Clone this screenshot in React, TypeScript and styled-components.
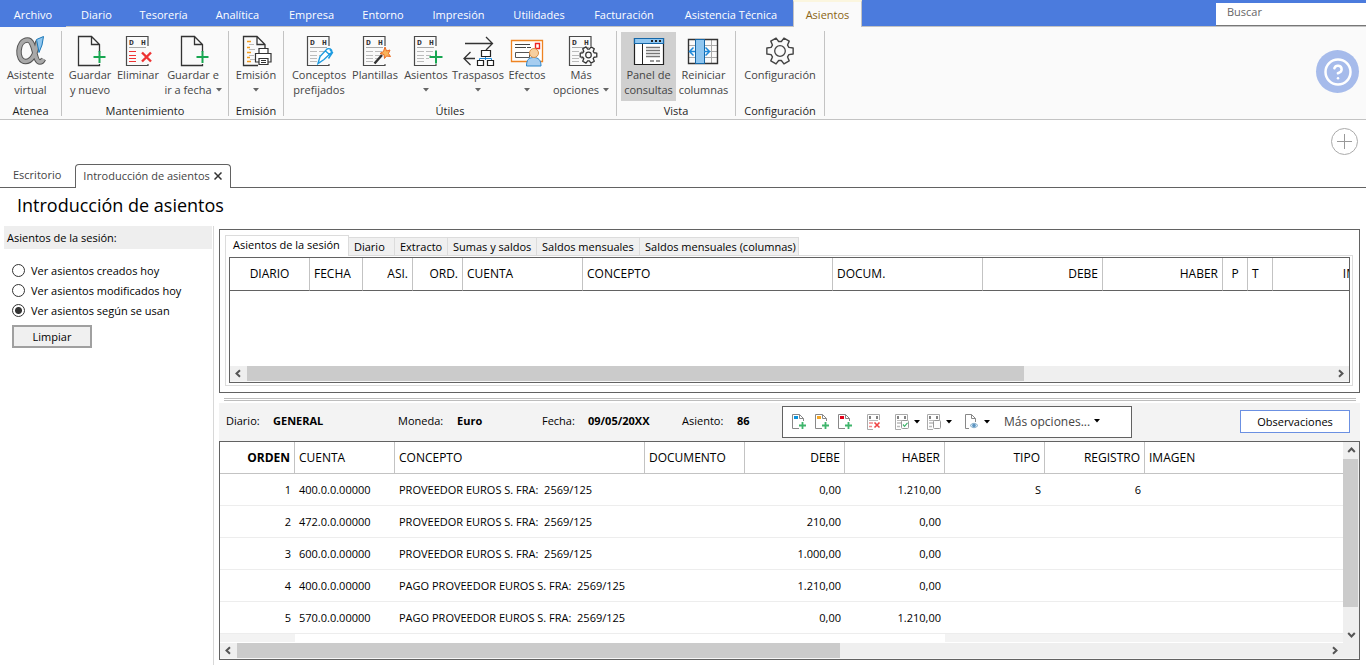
import React, { ReactNode, useState } from 'react';
import styled, { createGlobalStyle, css } from 'styled-components';
import { CircleHelp } from 'lucide-react';

const blue = '#4b7bdd';
const line = '#c3c3c3';
const dark = '#626262';

const GlobalStyle = createGlobalStyle`
  *, *::before, *::after { box-sizing: border-box; }
  body {
    margin: 0;
    background: #fff;
    color: #000;
    font-family: 'Open Sans', 'Noto Sans', sans-serif;
    font-size: 11px;
    line-height: 15px;
  }
  button, input { font: inherit; color: inherit; }
  button { border: 0; padding: 0; background: none; cursor: pointer; }
  svg { display: block; flex: none; }
`;

/* ---------- page ---------- */

const Page = styled.div`
  display: flex;
  flex-direction: column;
  min-height: 100vh;
  overflow: hidden;
`;

const MenuBar = styled.nav`
  display: flex;
  height: 27px;
  background: ${blue};
  box-shadow: inset 0 -1px 0 ${line};
`;

const MenuItem = styled.button<{ $width: number; $solid?: boolean; $active?: boolean }>`
  width: ${(p) => p.$width}px;
  flex: none;
  padding-top: 1px;
  color: #fff;
  white-space: nowrap;
  ${(p) => p.$solid && css`background: ${blue};`}
  ${(p) =>
    p.$active &&
    css`
      padding: 0 0 1px;
      background: #fafafa;
      color: #8a6414;
      border: 1px solid ${line};
      border-top: 2px solid #fbf6df;
      border-bottom: 0;
    `}
`;

const Search = styled.input`
  width: 150px;
  height: 23px;
  margin: 3px 0 0 auto;
  padding: 0 11px 6px;
  border: 0;
  border-bottom: 1px solid #777;
  border-radius: 0;
  background: #fff;
  outline: 0;
  &::placeholder { color: #666; opacity: 1; }
`;

const Ribbon = styled.div`
  display: flex;
  height: 93px;
  padding-top: 4px;
  background: #fafafa;
  border-bottom: 1px solid ${line};
`;

const Group = styled.section`
  display: flex;
  flex-direction: column;
  height: 85px;
  padding: 1px 4px 0;
  border-right: 1px solid ${line};
`;

const GroupTools = styled.div`
  display: flex;
  flex: none;
  height: 69px;
`;

const GroupName = styled.div`
  flex: none;
  padding-top: 2px;
  text-align: center;
  color: #1e1e1e;
`;

const Tool = styled.button<{ $width: number; $pressed?: boolean }>`
  display: flex;
  flex-direction: column;
  align-items: center;
  width: ${(p) => p.$width}px;
  padding-top: 3px;
  color: #444;
  white-space: nowrap;
  background: ${(p) => (p.$pressed ? '#d0d0d0' : 'transparent')};
`;

const ToolLine = styled.span`
  display: flex;
  align-items: center;
  gap: 4px;
  height: 15px;
`;

const Help = styled.button`
  display: flex;
  align-items: center;
  justify-content: center;
  width: 43px;
  height: 43px;
  margin: 19px 7px 0 auto;
  border-radius: 50%;
  background: #a6bbeb;
  color: #fff;
`;

const DocBar = styled.div`
  display: flex;
  align-items: flex-end;
  height: 68px;
  border-bottom: 1px solid ${dark};
`;

const DocTab = styled.div<{ $active?: boolean }>`
  display: flex;
  align-items: center;
  gap: 4px;
  height: 24px;
  padding: 0 14px 2px 13px;
  color: #444;
  ${(p) =>
    p.$active &&
    css`
      padding: 0 8px 2px 7px;
      margin-bottom: -1px;
      background: #fff;
      border: 1px solid ${dark};
      border-bottom: 0;
      border-radius: 4px 4px 0 0;
    `}
`;

const AddTab = styled.button`
  align-self: flex-start;
  margin: 7px 8px 0 auto;
`;

const Title = styled.h1`
  margin: 0;
  padding: 5px 17px 0;
  height: 38px;
  font-size: 18px;
  line-height: 24px;
  font-weight: 400;
`;

const Main = styled.main`
  display: flex;
  flex: 1;
`;

const Sidebar = styled.aside`
  width: 214px;
  flex: none;
  padding: 0 1px 0 4px;
  border-right: 1px solid #d8d8d8;
`;

const SidebarHead = styled.h2`
  margin: 0 0 11px;
  padding: 4px 3px;
  font-size: 11px;
  font-weight: 400;
  background: #eee;
`;

const Option = styled.label`
  display: flex;
  align-items: center;
  gap: 6px;
  height: 20px;
  padding-left: 8px;
`;

const Radio = styled.input`
  appearance: none;
  width: 13px;
  height: 13px;
  margin: 0;
  border: 1px solid #333;
  border-radius: 50%;
  background: #fff;
  &:checked { background: radial-gradient(circle, #333 0 3px, #fff 4px); }
`;

const ClearButton = styled.button`
  width: 80px;
  height: 23px;
  margin: 5px 0 0 8px;
  border: 2px solid #a0a0a0;
  background: #f0f0f0;
`;

const Content = styled.div`
  flex: 1;
  min-width: 0;
  padding: 3px 6px 5px 5px;
`;

/* ---------- query panel ---------- */

const QueryPanel = styled.section`
  padding: 5px 6px 6px 5px;
  border: 1px solid ${dark};
`;

const QueryTabs = styled.div`
  display: flex;
  align-items: flex-end;
`;

const QueryTab = styled.button<{ $width: number; $active?: boolean }>`
  width: ${(p) => p.$width}px;
  height: 18px;
  padding: 0 0 1px 5px;
  border: 1px solid #dcdcdc;
  border-width: 1px 1px 0 0;
  background: #f0f0f0;
  text-align: left;
  white-space: nowrap;
  ${(p) =>
    p.$active &&
    css`
      height: 21px;
      padding: 0 0 3px 7px;
      margin-bottom: -1px;
      border-left-width: 1px;
      background: #fff;
    `}
`;

const QueryFrame = styled.div`
  padding: 1px 2px 2px 3px;
  border: 1px solid #dcdcdc;
`;

const GridBox = styled.div`
  border: 1px solid ${dark};
  overflow: hidden;
`;

const QueryBody = styled.div`
  height: 108px;
  overflow: hidden;
`;

const Table = styled.table<{ $width?: string }>`
  width: ${(p) => p.$width ?? '100%'};
  table-layout: fixed;
  border-collapse: separate;
  border-spacing: 0;
`;

type Align = 'left' | 'right' | 'center';

const Th = styled.th<{ $align: Align; $bold?: boolean }>`
  height: 32px;
  padding: 0 4px;
  font-size: 12px;
  font-weight: ${(p) => (p.$bold ? 700 : 400)};
  text-align: ${(p) => p.$align};
  white-space: nowrap;
  border-right: 1px solid ${line};
  border-bottom: 1px solid ${line};
  &:last-child { border-right: 0; }
`;

const QueryHead = styled.thead`
  ${Th} { height: 33px; padding-bottom: 2px; border-bottom-color: ${dark}; }
`;

const Td = styled.td<{ $align: Align }>`
  height: 32px;
  padding: 0 4px;
  text-align: ${(p) => p.$align};
  white-space: pre;
  border-bottom: 1px solid #ededed;
`;

const RestCell = styled.td<{ $gray?: boolean }>`
  height: 8px;
  padding: 0;
  background: ${(p) => (p.$gray ? '#f3f3f3' : '#fff')};
`;

const HTrack = styled.div`
  display: flex;
  align-items: center;
  height: 16px;
  border-bottom: 1px solid #f7f7f7;
  background: #efefef;
`;

const VTrack = styled.div`
  display: flex;
  flex-direction: column;
  width: 16px;
  flex: none;
  background: #efefef;
`;

const ScrollButton = styled.button`
  display: flex;
  align-items: center;
  justify-content: center;
  width: 17px;
  height: 17px;
  flex: none;
`;

const HThumb = styled.div<{ $size: string }>`
  width: ${(p) => p.$size};
  height: 15px;
  background: #cbcbcb;
`;

const VThumb = styled.div<{ $size: string }>`
  width: 15px;
  height: ${(p) => p.$size};
  background: #cbcbcb;
`;

const Rail = styled.div`
  flex: 1;
  min-width: 0;
`;

const Splitter = styled.div`
  height: 3px;
  margin: 5px 4px 2px 5px;
  border: solid #bdbdbd;
  border-width: 1px 0;
`;

/* ---------- entry panel ---------- */

const InfoBar = styled.div`
  display: flex;
  align-items: center;
  height: 38px;
  padding: 0 10px 0 7px;
  background: #f3f3f3;
`;

const Field = styled.div<{ $width: number }>`
  display: flex;
  width: ${(p) => p.$width}px;
  padding-bottom: 4px;
`;

const FieldName = styled.span<{ $width: number }>`
  width: ${(p) => p.$width}px;
`;

const ToolStrip = styled.div`
  display: flex;
  align-items: center;
  gap: 6px;
  width: 350px;
  height: 32px;
  padding-left: 4px;
  border: 1px solid ${dark};
  background: #fff;
`;

const StripGroup = styled.div`
  display: flex;
`;

const StripButton = styled.button<{ $split?: boolean }>`
  display: flex;
  align-items: center;
  gap: 4px;
  width: ${(p) => (p.$split ? 32 : 23)}px;
  height: 24px;
  padding-left: ${(p) => (p.$split ? 3 : 4)}px;
`;

const MoreButton = styled.button`
  display: flex;
  align-items: center;
  gap: 4px;
  padding: 0 0 2px 5px;
  font-size: 12px;
  color: #444;
`;

const NotesButton = styled.button`
  width: 110px;
  height: 23px;
  margin: 0 0 2px auto;
  border: 1px solid #6b90e2;
  background: #fff;
`;

const EntryRow = styled.div`
  display: flex;
`;

const EntryBody = styled.div`
  flex: 1;
  min-width: 0;
  border-bottom: 1px solid #fff;
`;

/* ---------- icons ---------- */

const Svg = ({ w = 34, h = 32, children }: { w?: number; h?: number; children: ReactNode }) => (
  <svg width={w} height={h} viewBox={`0 0 ${w} ${h}`} fill="none" aria-hidden="true">
    {children}
  </svg>
);

const Caret = ({ color = '#000' }: { color?: string }) => (
  <Svg w={6} h={4}>
    <path d="M0 0h6L3 3.5z" fill={color} />
  </Svg>
);

const Chevron = ({ turn = 0 }: { turn?: number }) => (
  <svg width="9" height="9" viewBox="0 0 9 9" fill="none" aria-hidden="true">
    <path d="M6 1.2L2.5 4.5L6 7.8" stroke="#555" strokeWidth="2" transform={`rotate(${turn} 4.5 4.5)`} />
  </svg>
);

const gearPath = (cx: number, cy: number, outer: number, inner: number) => {
  const pts: string[] = [];
  for (let i = 0; i < 6; i++) {
    const a = i * 60;
    [
      [inner, -22],
      [outer, -13],
      [outer, 13],
      [inner, 22],
    ].forEach(([r, d]) => {
      const t = ((a + d) * Math.PI) / 180;
      pts.push(`${(cx + r * Math.cos(t)).toFixed(2)} ${(cy + r * Math.sin(t)).toFixed(2)}`);
    });
  }
  return `M${pts.join('L')}Z`;
};

const alphaCurve = 'M24 6C22.500 15 19 26.500 11.500 26.500C2 26.500 3 5 13.500 5C21.500 5 19.500 27 26 27C27.500 27 28.500 26 29.500 24';

const AlphaIcon = () => (
  <Svg>
    <path d={alphaCurve} stroke="#555" strokeWidth="5.500" />
    <path d={alphaCurve} stroke="#a9a9a9" strokeWidth="3.500" />
    <path d="M22.500 4.500L29.500 1.500L28 10L25 17.500Z" fill="#8fc6ef" stroke="#1b78b8" />
  </Svg>
);

const NewDocIcon = () => (
  <Svg>
    <path d="M26.500 17V9.500L18.500 1.500H5.500V30.500H26.500V29M18.500 1.500V9.500H26.500" stroke="#333" strokeWidth="1.300" />
    <path d="M26.500 16v12M20.500 22h12" stroke="#18a651" strokeWidth="2" />
  </Svg>
);

const LedgerIcon = ({ red, children }: { red?: boolean; children: ReactNode }) => (
  <Svg>
    <path d="M27 11V1.500H5.500V30.500H27V29" stroke="#4a4a4a" strokeWidth="1.200" />
    <g fill="#333" fontFamily="'Liberation Mono', monospace" fontSize="8" fontWeight="700">
      <text x="8" y="10">D</text>
      <text x="20" y="10">H</text>
    </g>
    <path d="M8 12.500H25" stroke="#aaa" />
    <path d="M8 16.500h7M8 20.500h7M8 23.500h7M8 26.500h7" stroke={red ? '#e33' : '#bbb'} />
    {!red && <path d="M17 16.500h7M17 20.500h5M17 23.500h3" stroke="#bbb" />}
    {children}
  </Svg>
);

const DeleteIcon = () => (
  <LedgerIcon red>
    <path d="M21 17.500l9 9M30 17.500l-9 9" stroke="#e33" strokeWidth="2.400" />
  </LedgerIcon>
);

const PenIcon = () => (
  <LedgerIcon>
    <path d="M16 28.500l2-7 7-7.500c2-1 5 0 5 3l-8 7.500zM23.500 16l4.500 4M28 15l2.500 2.500-4 6" fill="#fff" stroke="#1e9be0" strokeWidth="1.400" />
  </LedgerIcon>
);

const WandIcon = () => (
  <LedgerIcon>
    <path d="M16.500 28.500L24 20" stroke="#333" strokeWidth="2.400" />
    <path d="M27 12l1.500 4 3.500-1-1.500 3.500 2 3-4-.5-2 2.500-.5-4-4-1 3.500-2z" fill="#f9b25a" stroke="#ea6a20" />
  </LedgerIcon>
);

const AddEntryIcon = () => (
  <LedgerIcon>
    <path d="M27 15.500v13M20.500 22h13" stroke="#18a651" strokeWidth="2" />
  </LedgerIcon>
);

const MoreIcon = () => (
  <LedgerIcon>
    <path d={gearPath(24.5, 20, 8.5, 6)} fill="#fafafa" stroke="#333" strokeWidth="1.300" strokeLinejoin="round" />
    <circle cx="24.500" cy="20" r="2.800" stroke="#333" strokeWidth="1.200" />
  </LedgerIcon>
);

const PrintIcon = () => (
  <Svg>
    <path d="M26 13V9.500L18 1.500H4.500V30.500H19M18 1.500V9.500H26" stroke="#333" strokeWidth="1.300" />
    <path d="M8 6.500h4M8 12.500h3M8 17.500h4M8 22.500h3M8 26.500h4" stroke="#f49a1a" strokeWidth="1.400" />
    <path d="M10 9.500h5M10 14.500h6M10 20.500h5M11 24.500h5" stroke="#bbb" />
    <path d="M20 18v-4.500h9V18M20 27h-3.500v-8.500h15.500v8.500h-3M20 23.500h9v6h-9zM22 25.500h5M22 27.500h5" fill="#fff" stroke="#333" strokeWidth="1.200" />
  </Svg>
);

const TransferIcon = () => (
  <Svg>
    <path d="M4 8.500H31M25 2l6.500 6.500L25 15M14 23.500H3.500M9.500 17L3 23.500L9.500 30" stroke="#333" strokeWidth="1.300" />
    <path d="M24.500 22v3M18.500 26v-2.500h12V26" stroke="#1e88d8" />
    <path d="M20.500 15.500h9v6h-9zM16.500 25.500h6v5h-6zM26.500 25.500h6v5h-6z" fill="#fff" stroke="#222" strokeWidth="1.200" />
  </Svg>
);

const EffectsIcon = () => (
  <Svg>
    <path d="M1.500 5.500H32.500V26.500H1.500z" fill="#fff" stroke="#ee8322" strokeWidth="1.300" />
    <path d="M5 9.500h15M5 12.500h11M17 12.500h4" stroke="#444" />
    <path d="M5.500 17.500h14v5h-14z" stroke="#555" />
    <path d="M25.500 8.500h4v5h-4z" stroke="#e22" strokeWidth="1.400" />
    <path d="M16.500 31c0-6 2-8.500 7-8.500s7.500 2.500 7.500 8.500z" fill="#a6cdf0" stroke="#2c86cc" />
    <circle cx="24" cy="18" r="4.500" fill="#f8cf9f" stroke="#d98c44" />
  </Svg>
);

const PanelIcon = () => (
  <Svg>
    <path d="M2.500 3.500h29v26h-29z" fill="#fff" stroke="#222" strokeWidth="1.200" />
    <path d="M2.500 3.500h29v5h-29z" fill="#8fc6f0" stroke="#1567a8" strokeWidth="1.200" />
    <path d="M19 6h2M23 6h2M27 6h2" stroke="#222" strokeWidth="2" />
    <path d="M10.500 9v20" stroke="#222" />
    <path d="M14 12.500h14M14 15.500h14M14 18.500h14M14 21.500h14M18 26h4M24 26h4" stroke="#777" strokeWidth="1.300" />
  </Svg>
);

const ColumnsIcon = () => (
  <Svg>
    <path d="M2 10.500h29M2 16.500h29M2 22.500h29M24.500 4v25" stroke="#aaa" />
    <path d="M1.500 4.500h29v24h-29z" stroke="#333" strokeWidth="1.400" />
    <path d="M8.500 4.500h9v24h-9z" fill="#8fc6f0" stroke="#1567a8" />
    <path d="M8 16.500H2.500M6.500 12.500l-4 4 4 4M17 16.500h5.500M18.500 12.500l4 4-4 4" stroke="#1e88d8" strokeWidth="1.500" />
  </Svg>
);

const GearIcon = () => (
  <Svg>
    <path d={gearPath(17, 16, 13.5, 9.6)} stroke="#444" strokeWidth="1.400" strokeLinejoin="round" />
    <circle cx="17" cy="16" r="5.300" stroke="#444" strokeWidth="1.300" />
  </Svg>
);

const SmallDoc = ({ color }: { color: string }) => (
  <Svg w={16} h={18}>
    <path d="M12.500 8V5.500L8.500 1.500H1.500V15.500H8M8.500 1.500V5.500H12.500" stroke="#888" />
    <path d="M3 3h4v3H3z" fill={color} />
    <path d="M11.500 9v7M8 12.500h7" stroke="#3fb56c" strokeWidth="1.800" />
  </Svg>
);

const SmallLedger = ({ kind }: { kind: 'delete' | 'check' | 'copy' }) => (
  <Svg w={16} h={18}>
    <path d="M13.500 7V1.500H1.500V16.500H7" stroke="#aaa" />
    <path d="M4 3v3M11 3v3" stroke="#666" strokeWidth="1.600" />
    <path d="M3 7.500h9" stroke="#bbb" />
    <path d="M3 10h4M3 13.500h3" stroke={kind === 'delete' ? '#ee8a8a' : '#bbb'} strokeWidth="1.400" />
    {kind === 'delete' && <path d="M8.500 9.500l5 5M13.500 9.500l-5 5" stroke="#e44" strokeWidth="1.600" />}
    {kind !== 'delete' && <rect x="7.500" y="7.500" width="7" height="8" rx="1" fill="#fff" stroke="#999" />}
    {kind === 'check' && <path d="M9 11.500l1.500 1.800 3-3.500" stroke="#3fb56c" strokeWidth="1.200" />}
  </Svg>
);

const ViewDoc = () => (
  <Svg w={16} h={18}>
    <path d="M11.500 9V5.500L7.500 1.500H1.500V15.500H5M7.500 1.500V5.500H11.500" stroke="#888" />
    <path d="M6 12.500q4-4.500 8 0q-4 4.500-8 0z" fill="#dcecf8" stroke="#8ab0cc" />
    <circle cx="10" cy="12.500" r="1.800" fill="#5a93c0" />
  </Svg>
);

const PlusCircle = () => (
  <Svg w={28} h={28}>
    <circle cx="14.500" cy="14.500" r="13" stroke="#aaa" />
    <path d="M14.500 7v15M7 14.500h15" stroke="#999" />
  </Svg>
);

const CloseIcon = () => (
  <Svg w={8} h={8}>
    <path d="M0.500 0.500l7 7M7.500 0.500l-7 7" stroke="#333" strokeWidth="1.500" />
  </Svg>
);

/* ---------- data ---------- */

const menu: [string, number][] = [
  ['Archivo', 66],
  ['Diario', 61],
  ['Tesorería', 73],
  ['Analítica', 75],
  ['Empresa', 73],
  ['Entorno', 70],
  ['Impresión', 81],
  ['Utilidades', 80],
  ['Facturación', 90],
  ['Asistencia Técnica', 124],
  ['Asientos', 69],
];

type ToolDef = { icon: ReactNode; first: string; second?: string; caret?: boolean; width: number; pressed?: boolean };

const ribbon: { name: string; tools: ToolDef[] }[] = [
  { name: 'Atenea', tools: [{ icon: <AlphaIcon />, first: 'Asistente', second: 'virtual', width: 53 }] },
  {
    name: 'Mantenimiento',
    tools: [
      { icon: <NewDocIcon />, first: 'Guardar', second: 'y nuevo', width: 48 },
      { icon: <DeleteIcon />, first: 'Eliminar', width: 48 },
      { icon: <NewDocIcon />, first: 'Guardar e', second: 'ir a fecha', caret: true, width: 62 },
    ],
  },
  { name: 'Emisión', tools: [{ icon: <PrintIcon />, first: 'Emisión', caret: true, width: 46 }] },
  {
    name: 'Útiles',
    tools: [
      { icon: <PenIcon />, first: 'Conceptos', second: 'prefijados', width: 62 },
      { icon: <WandIcon />, first: 'Plantillas', width: 50 },
      { icon: <AddEntryIcon />, first: 'Asientos', caret: true, width: 52 },
      { icon: <TransferIcon />, first: 'Traspasos', caret: true, width: 52 },
      { icon: <EffectsIcon />, first: 'Efectos', caret: true, width: 46 },
      { icon: <MoreIcon />, first: 'Más', second: 'opciones', caret: true, width: 62 },
    ],
  },
  {
    name: 'Vista',
    tools: [
      { icon: <PanelIcon />, first: 'Panel de', second: 'consultas', width: 55, pressed: true },
      { icon: <ColumnsIcon />, first: 'Reiniciar', second: 'columnas', width: 55 },
    ],
  },
  { name: 'Configuración', tools: [{ icon: <GearIcon />, first: 'Configuración', width: 80 }] },
];

const options = ['Ver asientos creados hoy', 'Ver asientos modificados hoy', 'Ver asientos según se usan'];

const queryTabs: [string, number][] = [
  ['Asientos de la sesión', 124],
  ['Diario', 46],
  ['Extracto', 53],
  ['Sumas y saldos', 89],
  ['Saldos mensuales', 103],
  ['Saldos mensuales (columnas)', 159],
];

type Column = { name: string; width?: number; align: Align; bold?: boolean };

const queryColumns: Column[] = [
  { name: 'DIARIO', width: 80, align: 'center' },
  { name: 'FECHA', width: 53, align: 'left' },
  { name: 'ASI.', width: 50, align: 'right' },
  { name: 'ORD.', width: 50, align: 'right' },
  { name: 'CUENTA', width: 120, align: 'left' },
  { name: 'CONCEPTO', width: 250, align: 'left' },
  { name: 'DOCUM.', width: 150, align: 'left' },
  { name: 'DEBE', width: 120, align: 'right' },
  { name: 'HABER', width: 120, align: 'right' },
  { name: 'P', width: 25, align: 'center' },
  { name: 'T', width: 25, align: 'left' },
  { name: 'IMAGEN', width: 120, align: 'right' },
];

const entryColumns: Column[] = [
  { name: 'ORDEN', width: 75, align: 'right', bold: true },
  { name: 'CUENTA', width: 100, align: 'left' },
  { name: 'CONCEPTO', width: 250, align: 'left' },
  { name: 'DOCUMENTO', width: 100, align: 'left' },
  { name: 'DEBE', width: 100, align: 'right' },
  { name: 'HABER', width: 100, align: 'right' },
  { name: 'TIPO', width: 100, align: 'right' },
  { name: 'REGISTRO', width: 100, align: 'right' },
  { name: 'IMAGEN', align: 'left' },
];

const entries: string[][] = [
  ['1', '400.0.0.00000', 'PROVEEDOR EUROS S. FRA:  2569/125', '', '0,00', '1.210,00', 'S', '6', ''],
  ['2', '472.0.0.00000', 'PROVEEDOR EUROS S. FRA:  2569/125', '', '210,00', '0,00', '', '', ''],
  ['3', '600.0.0.00000', 'PROVEEDOR EUROS S. FRA:  2569/125', '', '1.000,00', '0,00', '', '', ''],
  ['4', '400.0.0.00000', 'PAGO PROVEEDOR EUROS S. FRA:  2569/125', '', '1.210,00', '0,00', '', '', ''],
  ['5', '570.0.0.00000', 'PAGO PROVEEDOR EUROS S. FRA:  2569/125', '', '0,00', '1.210,00', '', '', ''],
];

const fields: [string, string, number, number][] = [
  ['Diario:', 'GENERAL', 172, 47],
  ['Moneda:', 'Euro', 144, 59],
  ['Fecha:', '09/05/20XX', 140, 46],
  ['Asiento:', '86', 100, 55],
];

/* ---------- parts ---------- */

const Columns = ({ columns }: { columns: Column[] }) => (
  <colgroup>
    {columns.map((c) => (
      <col key={c.name} width={c.width} />
    ))}
  </colgroup>
);

const HeadRow = ({ columns }: { columns: Column[] }) => (
  <tr>
    {columns.map((c) => (
      <Th key={c.name} scope="col" $align={c.align} $bold={c.bold}>
        {c.name}
      </Th>
    ))}
  </tr>
);

const HScroll = ({ size, corner }: { size: string; corner?: boolean }) => (
  <HTrack>
    <ScrollButton aria-label="Desplazar a la izquierda"><Chevron /></ScrollButton>
    <Rail><HThumb $size={size} /></Rail>
    <ScrollButton aria-label="Desplazar a la derecha"><Chevron turn={180} /></ScrollButton>
    {corner && <VTrack />}
  </HTrack>
);

export default function App() {
  const [selected, setSelected] = useState(2);

  return (
    <Page>
      <GlobalStyle />
      <MenuBar>
        {menu.map(([name, width], i) => (
          <MenuItem key={name} $width={width} $solid={i === 0} $active={i === menu.length - 1}>
            {name}
          </MenuItem>
        ))}
        <Search placeholder="Buscar" aria-label="Buscar" />
      </MenuBar>

      <Ribbon>
        {ribbon.map((group) => (
          <Group key={group.name}>
            <GroupTools>
              {group.tools.map((t) => (
                <Tool key={t.first} $width={t.width} $pressed={t.pressed}>
                  {t.icon}
                  <ToolLine>{t.first}</ToolLine>
                  <ToolLine>
                    {t.second}
                    {t.caret && <Caret color="#666" />}
                  </ToolLine>
                </Tool>
              ))}
            </GroupTools>
            <GroupName>{group.name}</GroupName>
          </Group>
        ))}
        <Help aria-label="Ayuda">
          <CircleHelp size={30} strokeWidth={2} />
        </Help>
      </Ribbon>

      <DocBar>
        <DocTab>Escritorio</DocTab>
        <DocTab $active>
          Introducción de asientos
          <button aria-label="Cerrar"><CloseIcon /></button>
        </DocTab>
        <AddTab aria-label="Nueva pestaña"><PlusCircle /></AddTab>
      </DocBar>

      <Title>Introducción de asientos</Title>

      <Main>
        <Sidebar>
          <SidebarHead>Asientos de la sesión:</SidebarHead>
          {options.map((text, i) => (
            <Option key={text}>
              <Radio type="radio" name="sesion" checked={selected === i} onChange={() => setSelected(i)} />
              {text}
            </Option>
          ))}
          <ClearButton>Limpiar</ClearButton>
        </Sidebar>

        <Content>
          <QueryPanel>
            <QueryTabs>
              {queryTabs.map(([name, width], i) => (
                <QueryTab key={name} $width={width} $active={i === 0}>
                  {name}
                </QueryTab>
              ))}
            </QueryTabs>
            <QueryFrame>
              <GridBox>
                <QueryBody>
                  <Table $width="1163px">
                    <Columns columns={queryColumns} />
                    <QueryHead>
                      <HeadRow columns={queryColumns} />
                    </QueryHead>
                  </Table>
                </QueryBody>
                <HScroll size="71.6%" />
              </GridBox>
            </QueryFrame>
          </QueryPanel>

          <Splitter />

          <InfoBar>
            {fields.map(([name, value, width, nameWidth]) => (
              <Field key={name} $width={width}>
                <FieldName $width={nameWidth}>{name}</FieldName>
                <b>{value}</b>
              </Field>
            ))}
            <ToolStrip>
              <StripGroup>
                <StripButton aria-label="Nuevo apunte"><SmallDoc color="#0a93dd" /></StripButton>
                <StripButton aria-label="Insertar apunte"><SmallDoc color="#f5a623" /></StripButton>
                <StripButton aria-label="Duplicar apunte"><SmallDoc color="#e2001a" /></StripButton>
              </StripGroup>
              <StripButton aria-label="Eliminar apunte"><SmallLedger kind="delete" /></StripButton>
              <StripGroup>
                <StripButton $split aria-label="Marcar"><SmallLedger kind="check" /><Caret /></StripButton>
                <StripButton $split aria-label="Copiar"><SmallLedger kind="copy" /><Caret /></StripButton>
              </StripGroup>
              <StripButton $split aria-label="Ver documento"><ViewDoc /><Caret /></StripButton>
              <MoreButton>
                Más opciones... <Caret />
              </MoreButton>
            </ToolStrip>
            <NotesButton>Observaciones</NotesButton>
          </InfoBar>

          <GridBox>
            <EntryRow>
              <EntryBody>
                <Table>
                  <Columns columns={entryColumns} />
                  <thead>
                    <HeadRow columns={entryColumns} />
                  </thead>
                  <tbody>
                    {entries.map((row) => (
                      <tr key={row[0]}>
                        {row.map((cell, i) => (
                          <Td key={i} $align={entryColumns[i].align}>{cell}</Td>
                        ))}
                      </tr>
                    ))}
                    <tr>
                      <RestCell $gray />
                      <RestCell colSpan={5} />
                      <RestCell $gray colSpan={3} />
                    </tr>
                  </tbody>
                </Table>
              </EntryBody>
              <VTrack>
                <ScrollButton aria-label="Desplazar arriba"><Chevron turn={90} /></ScrollButton>
                <Rail><VThumb $size="148px" /></Rail>
                <ScrollButton aria-label="Desplazar abajo"><Chevron turn={270} /></ScrollButton>
              </VTrack>
            </EntryRow>
            <HScroll size="55.4%" corner />
          </GridBox>
        </Content>
      </Main>
    </Page>
  );
}
